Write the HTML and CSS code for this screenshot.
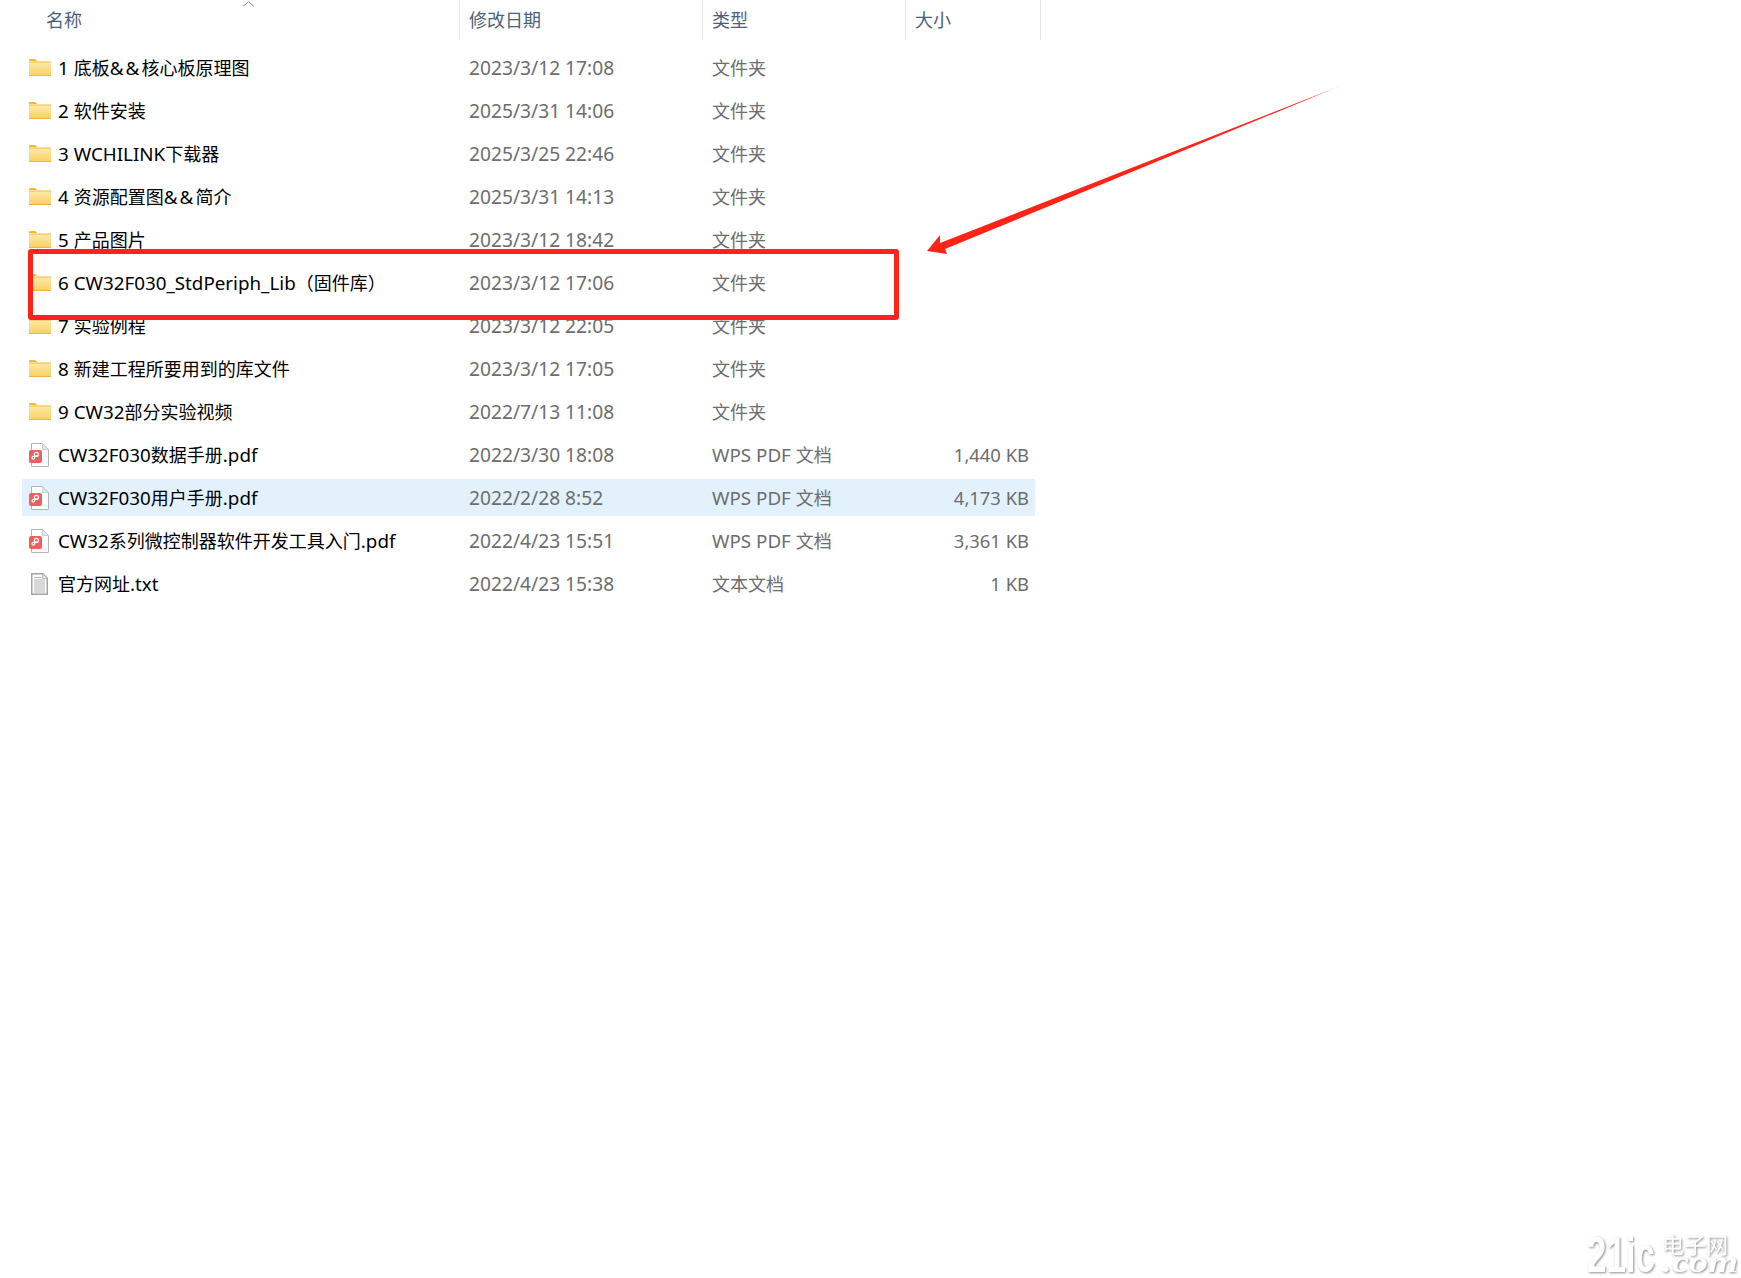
FILE: index.html
```html
<!DOCTYPE html>
<html lang="zh-CN">
<head>
<meta charset="utf-8">
<title>文件列表</title>
<link rel="stylesheet" href="styles.css">
</head>
<body>
<svg class="defs" width="0" height="0" aria-hidden="true">
  <defs>
    <linearGradient id="fg" x1="0" y1="0" x2="0" y2="1">
      <stop offset="0" stop-color="#fdeaa6"/>
      <stop offset="1" stop-color="#fad067"/>
    </linearGradient>
    <symbol id="folder" viewBox="0 0 22 17">
      <path d="M0 1a1 1 0 0 1 1-1h5l2.500 2H0z" fill="#f6b92b"/>
      <path d="M0 2.500h22V17H0z" fill="#f0b73d"/>
      <path d="M0 3.500h22V16H0z" fill="url(#fg)"/>
    </symbol>
    <symbol id="pdf" viewBox="0 0 20 24">
      <path d="M2.500.5h11l6 6v16.500a.5.5 0 0 1-.5.5H3a.5.5 0 0 1-.5-.5z" fill="#fff" stroke="#b4b4b4"/>
      <path d="M13.500.5v6h6z" fill="#e4e4e4" stroke="#c4c4c4" stroke-width=".7"/>
      <rect x="0" y="7" width="13" height="13" rx="2" fill="#ee5f60"/>
      <circle cx="7.400" cy="11.400" r="2" fill="none" stroke="#fff" stroke-width="1.200"/>
      <path d="M6.200 12.800 5.600 15a1.300 1.300 0 1 1-1-1.500l3.500-.4" fill="none" stroke="#fff" stroke-width="1.200"/>
    </symbol>
    <symbol id="txt" viewBox="0 0 17 22">
      <path d="M.75.75h11l4.500 4.500v16h-15.500z" fill="#fbfbfb" stroke="#a3a3a3" stroke-width="1.500"/>
      <path d="M11.500 1v4.500H16" fill="#e6e6e6" stroke="#bdbdbd"/>
      <path d="M3 4.500h7M3 7h11M3 9h11M3 11h11M3 13h11M3 15h11M3 17h11M3 19h11" stroke="#b5b5b5"/>
    </symbol>
  </defs>
</svg>

<main class="explorer">
  <div class="header">
    <div class="head-cell head-name">名称
      <svg class="sort" width="13" height="7" viewBox="0 0 13 7"><path d="M1 6.500 6.500 1.500 12 6.500" fill="none" stroke="#8a8a8a" stroke-width="1"/></svg>
    </div>
    <div class="head-cell">修改日期</div>
    <div class="head-cell">类型</div>
    <div class="head-cell">大小</div>
  </div>

  <div class="rows">
    <div class="row"><div class="name"><svg class="ico-folder"><use href="#folder"/></svg><span class="label"><span class="lat">1 </span>底板<span class="lat amp">&amp;&amp;</span>核心板原理图</span></div><div class="meta date">2023/3/12 17:08</div><div class="meta">文件夹</div><div class="size"></div></div>
    <div class="row"><div class="name"><svg class="ico-folder"><use href="#folder"/></svg><span class="label"><span class="lat">2 </span>软件安装</span></div><div class="meta date">2025/3/31 14:06</div><div class="meta">文件夹</div><div class="size"></div></div>
    <div class="row"><div class="name"><svg class="ico-folder"><use href="#folder"/></svg><span class="label"><span class="lat">3 WCHILINK</span>下载器</span></div><div class="meta date">2025/3/25 22:46</div><div class="meta">文件夹</div><div class="size"></div></div>
    <div class="row"><div class="name"><svg class="ico-folder"><use href="#folder"/></svg><span class="label"><span class="lat">4 </span>资源配置图<span class="lat amp">&amp;&amp;</span>简介</span></div><div class="meta date">2025/3/31 14:13</div><div class="meta">文件夹</div><div class="size"></div></div>
    <div class="row"><div class="name"><svg class="ico-folder"><use href="#folder"/></svg><span class="label"><span class="lat">5 </span>产品图片</span></div><div class="meta date">2023/3/12 18:42</div><div class="meta">文件夹</div><div class="size"></div></div>
    <div class="row"><div class="name"><svg class="ico-folder"><use href="#folder"/></svg><span class="label"><span class="lat">6 CW32F030_StdPeriph_Lib</span>（固件库）</span></div><div class="meta date">2023/3/12 17:06</div><div class="meta">文件夹</div><div class="size"></div></div>
    <div class="row"><div class="name"><svg class="ico-folder"><use href="#folder"/></svg><span class="label"><span class="lat">7 </span>实验例程</span></div><div class="meta date">2023/3/12 22:05</div><div class="meta">文件夹</div><div class="size"></div></div>
    <div class="row"><div class="name"><svg class="ico-folder"><use href="#folder"/></svg><span class="label"><span class="lat">8 </span>新建工程所要用到的库文件</span></div><div class="meta date">2023/3/12 17:05</div><div class="meta">文件夹</div><div class="size"></div></div>
    <div class="row"><div class="name"><svg class="ico-folder"><use href="#folder"/></svg><span class="label"><span class="lat">9 CW32</span>部分实验视频</span></div><div class="meta date">2022/7/13 11:08</div><div class="meta">文件夹</div><div class="size"></div></div>
    <div class="row"><div class="name"><svg class="ico-pdf"><use href="#pdf"/></svg><span class="label"><span class="lat">CW32F030</span>数据手册<span class="lat">.pdf</span></span></div><div class="meta date">2022/3/30 18:08</div><div class="meta wps"><span class="lat">WPS PDF </span>文档</div><div class="size">1,440 KB</div></div>
    <div class="row selected"><div class="name"><svg class="ico-pdf"><use href="#pdf"/></svg><span class="label"><span class="lat">CW32F030</span>用户手册<span class="lat">.pdf</span></span></div><div class="meta date">2022/2/28 8:52</div><div class="meta wps"><span class="lat">WPS PDF </span>文档</div><div class="size">4,173 KB</div></div>
    <div class="row"><div class="name"><svg class="ico-pdf"><use href="#pdf"/></svg><span class="label"><span class="lat">CW32</span>系列微控制器软件开发工具入门<span class="lat">.pdf</span></span></div><div class="meta date">2022/4/23 15:51</div><div class="meta wps"><span class="lat">WPS PDF </span>文档</div><div class="size">3,361 KB</div></div>
    <div class="row"><div class="name"><svg class="ico-txt"><use href="#txt"/></svg><span class="label">官方网址<span class="lat">.txt</span></span></div><div class="meta date">2022/4/23 15:38</div><div class="meta">文本文档</div><div class="size">1 KB</div></div>
  </div>
</main>

<div class="callout-box"></div>
<svg class="callout-arrow" width="430" height="180" viewBox="925 80 430 180" aria-hidden="true">
  <defs>
    <linearGradient id="ag" gradientUnits="userSpaceOnUse" x1="1345" y1="84" x2="1305" y2="101">
      <stop offset="0" stop-color="#ff2318" stop-opacity=".25"/>
      <stop offset="1" stop-color="#ff2318"/>
    </linearGradient>
  </defs>
  <path d="M1345 84 945 249 947 254 927 251 940 235 940 243z" fill="url(#ag)"/>
</svg>

<svg class="watermark" width="154" height="49" viewBox="0 0 154 49">
  <text class="wm-big" x="0" y="43" textLength="68" lengthAdjust="spacingAndGlyphs">21ic</text>
  <text class="wm-cn" x="75" y="24" textLength="66" lengthAdjust="spacingAndGlyphs">电子网</text>
  <text class="wm-com" x="75" y="43" textLength="76" lengthAdjust="spacingAndGlyphs">.com</text>
</svg>
</body>
</html>
```

FILE: styles.css
```css
html, body {
  margin: 0;
  padding: 0;
  background: #fff;
}

body {
  position: relative;
  width: 1741px;
  height: 1278px;
  overflow: hidden;
  font-family: "Noto Sans", "Noto Sans CJK SC", sans-serif;
  font-size: 18px;
}

.defs {
  position: absolute;
}

.explorer {
  margin-left: 22px;
  width: 1019px;
}

.header {
  display: grid;
  grid-template-columns: 438px 243px 203px 135px;
  height: 40px;
}

.head-cell {
  position: relative;
  display: flex;
  align-items: center;
  padding-left: 9px;
  border-right: 1px solid #e5e5e5;
  color: #4c607a;
  line-height: 40px;
}

.head-name {
  padding-left: 24px;
}

.sort {
  position: absolute;
  left: 220px;
  top: 0;
}

.rows {
  display: flex;
  flex-direction: column;
  gap: 6px;
  padding-top: 9px;
}

.row {
  display: grid;
  grid-template-columns: 437px 243px 204px 129px;
  align-items: center;
  height: 37px;
  width: 1013px;
  border-radius: 2px;
  white-space: nowrap;
}

.selected {
  background: #e3f1fc;
}

.name {
  display: flex;
  align-items: center;
  padding-left: 7px;
  color: #000;
}

.lat {
  font-size: 18.8px;
}

.amp {
  letter-spacing: 2.2px;
}

.meta {
  padding-left: 10px;
  padding-bottom: 2px;
  color: #6d6d6d;
}

.wps {
  padding-bottom: 0;
}

.date {
  font-size: 19.2px;
  padding-bottom: 1px;
}

.size {
  padding-right: 6px;
  padding-bottom: 1px;
  text-align: right;
  font-size: 18.4px;
  color: #6d6d6d;
}

.ico-folder {
  width: 22px;
  height: 17px;
  margin-right: 7px;
  flex: none;
}

.ico-pdf {
  width: 20px;
  height: 24px;
  margin-right: 9px;
  flex: none;
}

.ico-txt {
  width: 17px;
  height: 22px;
  margin-left: 2px;
  margin-right: 10px;
  flex: none;
}

.callout-box {
  position: absolute;
  left: 28px;
  top: 249px;
  width: 871px;
  height: 71px;
  box-sizing: border-box;
  border: 5px solid #ff2318;
  border-radius: 3px;
}

.callout-arrow {
  position: absolute;
  left: 925px;
  top: 80px;
}

.watermark {
  position: absolute;
  left: 1587px;
  top: 1229px;
  fill: #fff;
  filter: drop-shadow(1px 1px 1px #8e8e8e);
}

.wm-big {
  font-family: "Liberation Sans", sans-serif;
  font-weight: 700;
  font-size: 50px;
}

.wm-cn {
  font-family: "Noto Sans CJK SC", sans-serif;
  font-size: 22px;
}

.wm-com {
  font-family: "Liberation Serif", serif;
  font-style: italic;
  font-weight: 700;
  font-size: 30px;
}
```
